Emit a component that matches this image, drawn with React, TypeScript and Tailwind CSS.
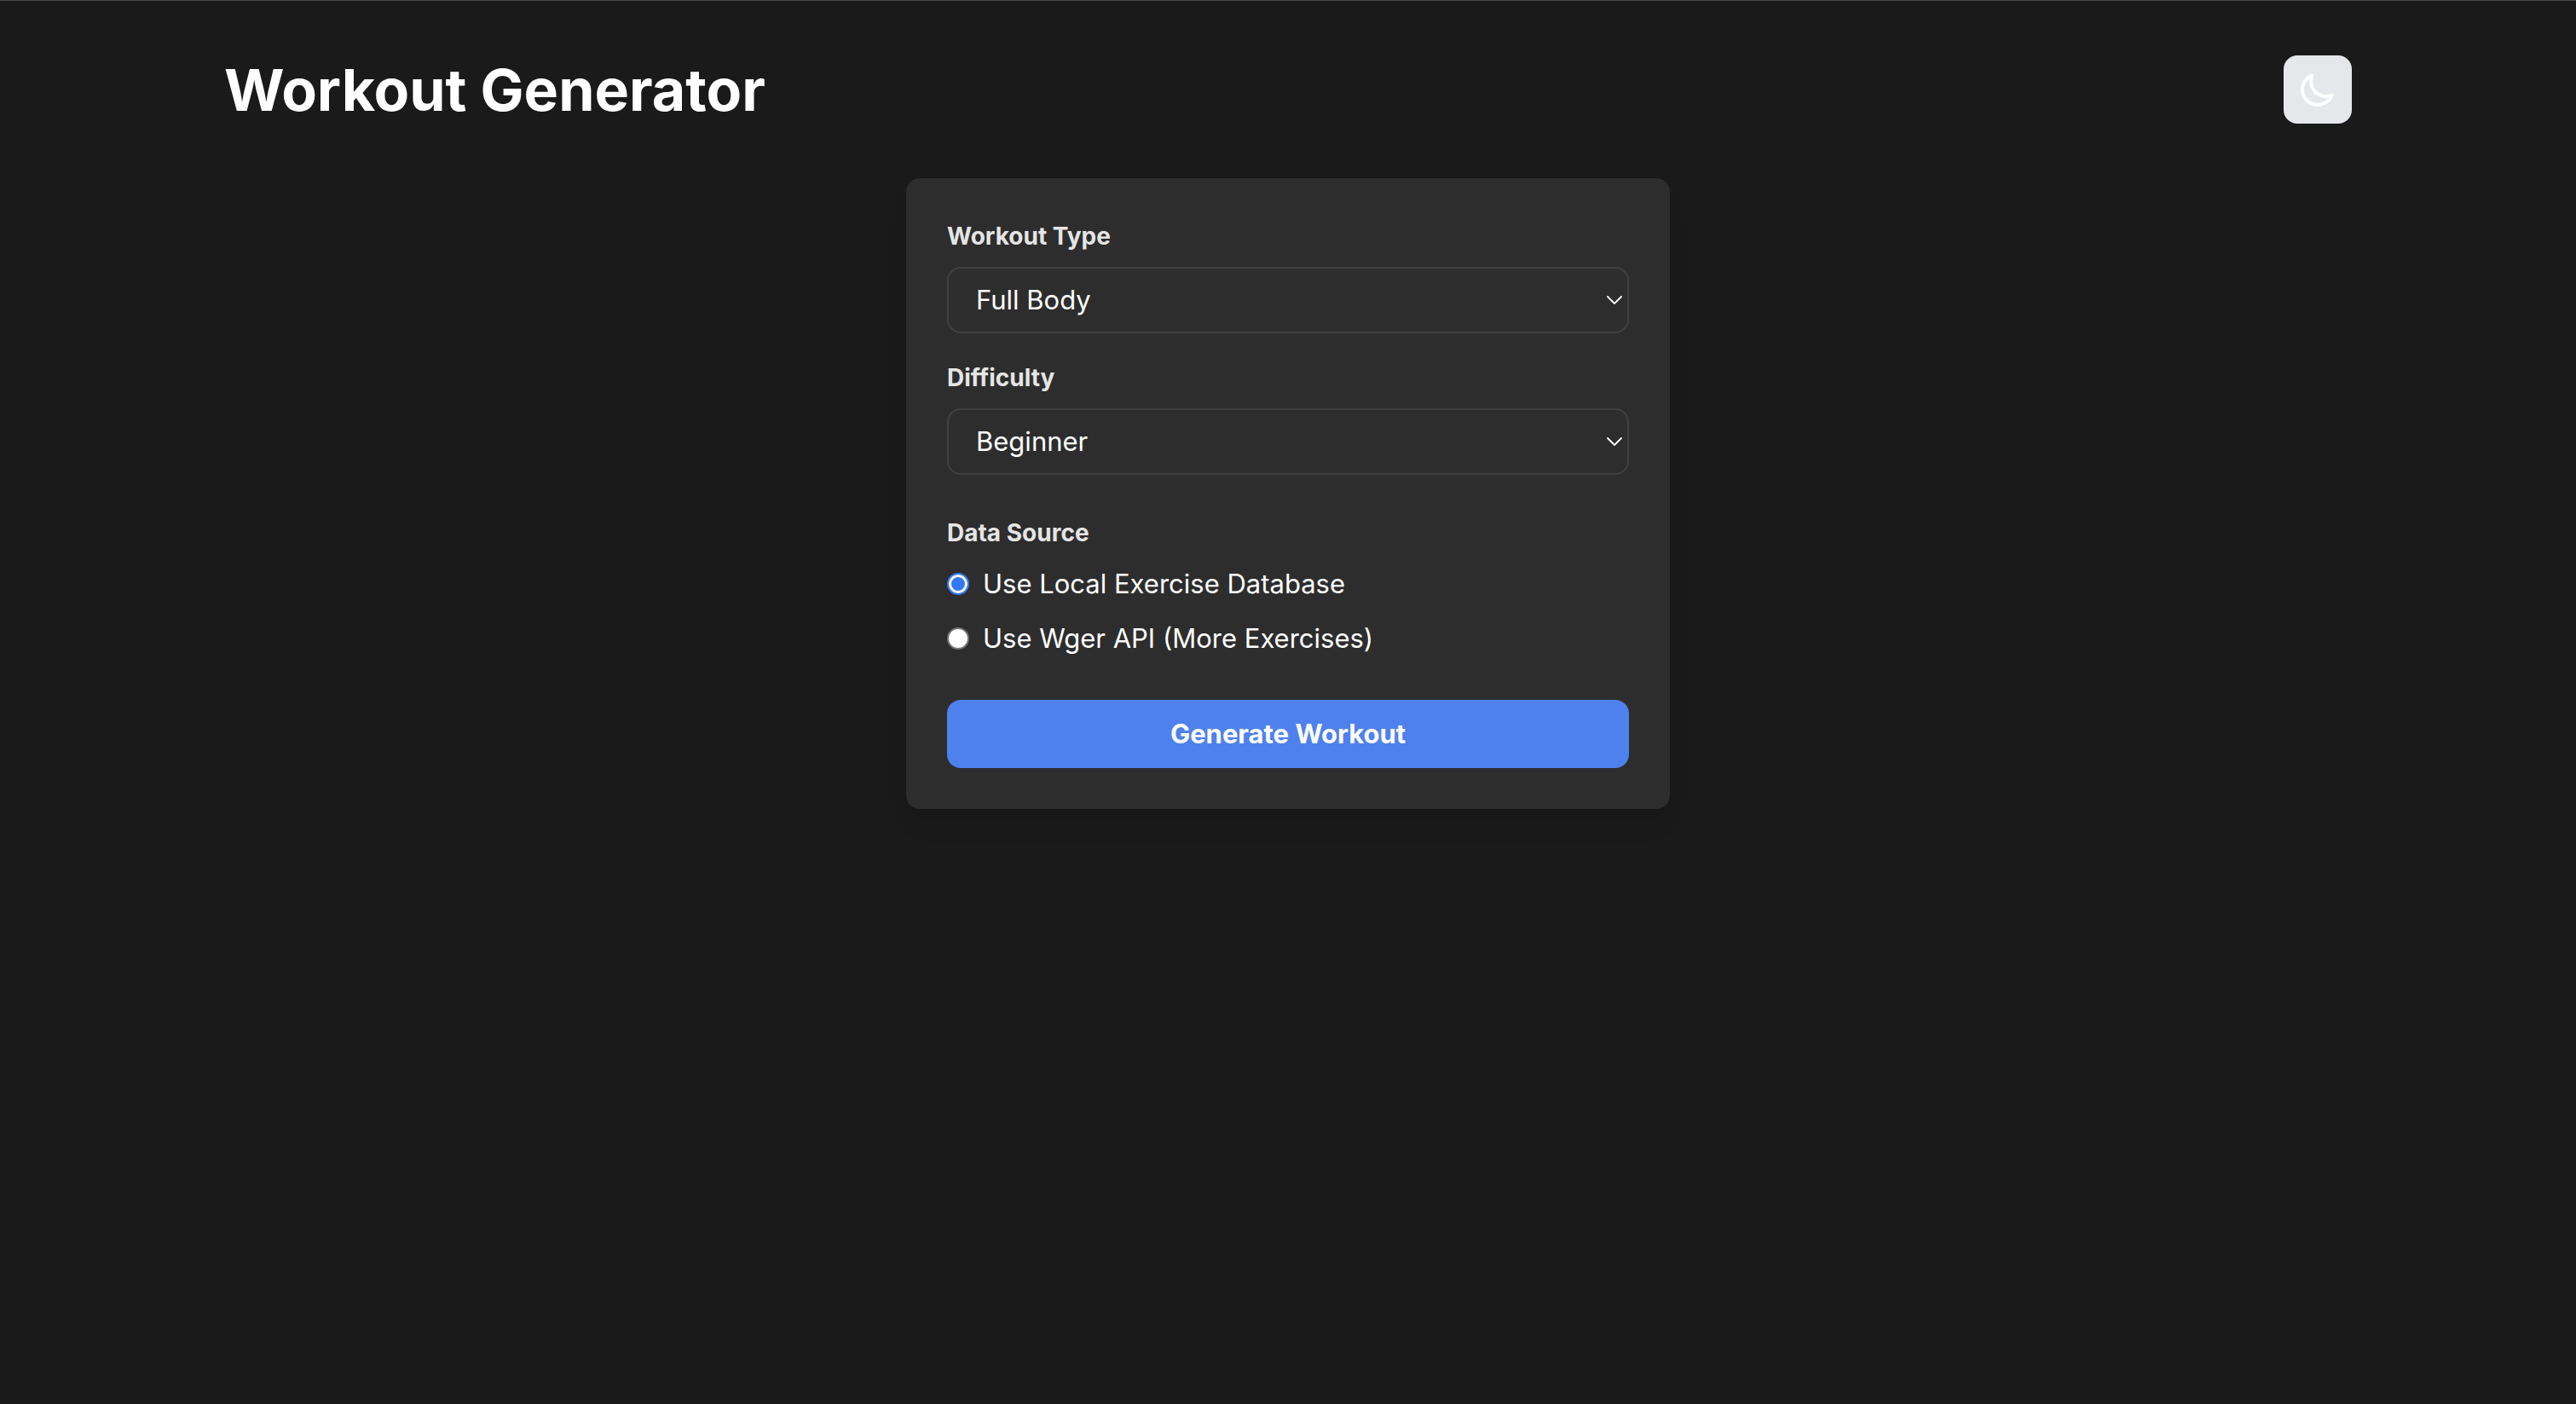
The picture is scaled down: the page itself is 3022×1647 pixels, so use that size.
import { useId, useState } from 'react';

type SelectFieldProps = {
  label: string;
  options: string[];
};

function SelectField({ label, options }: SelectFieldProps) {
  const id = useId();
  return (
    <div>
      <label htmlFor={id} className="mb-4 block text-[28px] leading-10 font-bold text-[#e5e5e5]">
        {label}
      </label>
      <div className="relative">
        <select
          id={id}
          className="block h-[78px] w-full appearance-none rounded-2xl border-2 border-[#404040] bg-[#2d2d2d] pr-16 pl-8 text-[31px] text-white"
        >
          {options.map((option) => (
            <option key={option}>{option}</option>
          ))}
        </select>
        <svg
          aria-hidden="true"
          viewBox="0 0 18 12"
          className="pointer-events-none absolute top-8 right-2 h-3 w-[18px] fill-none stroke-white"
          strokeWidth="1.8"
          strokeLinecap="round"
          strokeLinejoin="round"
        >
          <path d="M1 3L9 11L17 3" />
        </svg>
      </div>
    </div>
  );
}

type SourceOptionProps = {
  label: string;
  checked: boolean;
  onSelect: () => void;
};

function SourceOption({ label, checked, onSelect }: SourceOptionProps) {
  return (
    <label className="flex items-center gap-4 text-[31px] leading-[48px] text-white">
      <input
        type="radio"
        name="source"
        checked={checked}
        onChange={onSelect}
        className="size-[26px] shrink-0 appearance-none rounded-full border-2 border-[#767676] bg-white checked:border-[#3478f6] checked:bg-[#3478f6] checked:shadow-[inset_0_0_0_3px_#ffffff]"
      />
      {label}
    </label>
  );
}

export default function App() {
  const [source, setSource] = useState('local');

  return (
    <div className="min-h-screen border-t border-[#47474a] bg-[#1a1a1a] font-['Inter',sans-serif] text-white">
      <div className="mx-auto max-w-[2560px] px-8 py-16">
        <header className="mb-16 flex items-center justify-between">
          <h1 className="text-[68px] leading-[80px] font-bold">Workout Generator</h1>
          <button type="button" aria-label="Toggle dark mode" className="rounded-2xl bg-gray-200 p-4">
            <svg
              aria-hidden="true"
              viewBox="0 0 24 24"
              className="size-12 fill-none stroke-white"
              strokeWidth="2"
              strokeLinecap="round"
              strokeLinejoin="round"
            >
              <path d="M20.354 15.354A9 9 0 018.646 3.646 9.003 9.003 0 0012 21a9.003 9.003 0 008.354-5.646z" />
            </svg>
          </button>
        </header>

        <form
          onSubmit={(event) => event.preventDefault()}
          className="mx-auto max-w-4xl rounded-2xl bg-[#2d2d2d] p-12 shadow-[0_20px_30px_-6px_rgba(0,0,0,0.1),0_8px_12px_-8px_rgba(0,0,0,0.1)]"
        >
          <div className="flex flex-col gap-8">
            <SelectField label="Workout Type" options={['Full Body', 'Upper Body', 'Lower Body', 'Core']} />
            <SelectField label="Difficulty" options={['Beginner', 'Intermediate', 'Advanced']} />
          </div>

          <fieldset className="mt-12 flex flex-col gap-4">
            <legend className="mb-4 text-[28px] leading-10 font-bold text-[#e5e5e5]">Data Source</legend>
            <SourceOption
              label="Use Local Exercise Database"
              checked={source === 'local'}
              onSelect={() => setSource('local')}
            />
            <SourceOption
              label="Use Wger API (More Exercises)"
              checked={source === 'wger'}
              onSelect={() => setSource('wger')}
            />
          </fieldset>

          <button
            type="submit"
            className="mt-12 block w-full rounded-2xl bg-[#4f81ee] py-4 text-[31px] leading-[48px] font-bold text-white"
          >
            Generate Workout
          </button>
        </form>
      </div>
    </div>
  );
}
